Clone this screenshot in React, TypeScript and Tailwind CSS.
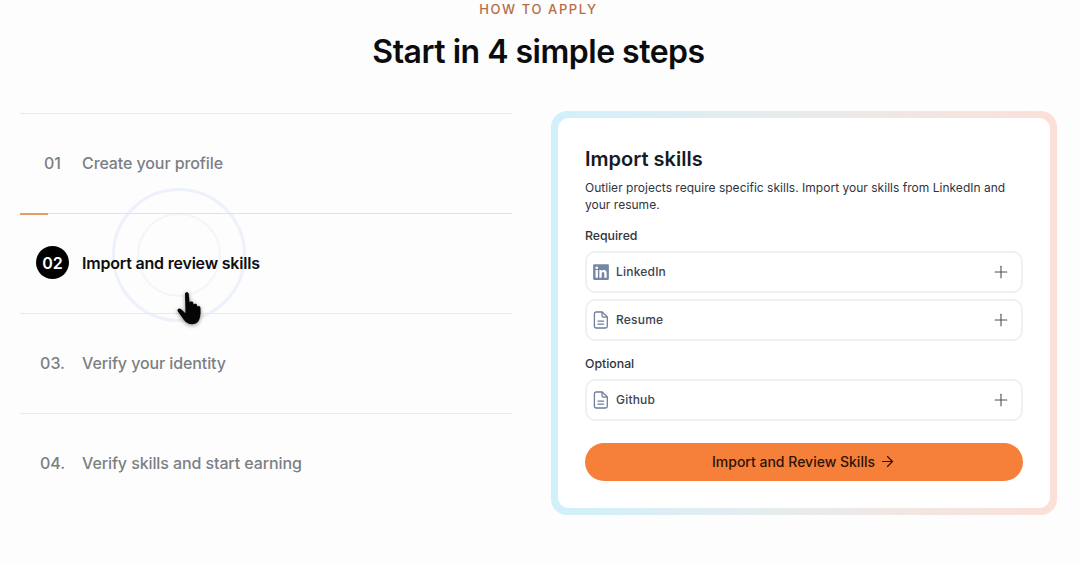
import { ArrowRight, Plus } from 'lucide-react';
import { FaLinkedin } from 'react-icons/fa';

const steps = [
  { num: '01', label: 'Create your profile' },
  { num: '02', label: 'Import and review skills', active: true },
  { num: '03.', label: 'Verify your identity' },
  { num: '04.', label: 'Verify skills and start earning' },
];

const DocIcon = () => (
  <svg width="16" height="18" viewBox="0 0 16 18" fill="none" stroke="#6f7f9c" strokeWidth="1.3" strokeLinejoin="round" strokeLinecap="round">
    <path d="M3 1h6.2L14.3 6v9.2a1.8 1.8 0 0 1-1.8 1.8H3.2a1.8 1.8 0 0 1-1.8-1.8V2.8A1.8 1.8 0 0 1 3 1Z" />
    <path d="M9 1.2v3.6a1.4 1.4 0 0 0 1.4 1.4h3.8" />
    <path d="M5 10.2h5.6M5 13.2h5.6" />
  </svg>
);

const HandCursor = () => (
  <svg width="26" height="36" viewBox="0 0 26 36" className="drop-shadow-[0_1px_2px_rgba(0,0,0,0.45)]">
    <path
      fill="#050505"
      d="M8 3c0-2.2 3.6-2.2 3.8 0l.8 8.6c.2-1.4 3.4-1.4 3.7.4l.3 1.4c.4-1.2 3.2-1 3.4.7l.2 1.4c.6-1 3-.7 3.2 1.1.4 4.2.2 8.6-1.2 12.2-1 2.8-3.4 4.4-6.8 4.4-4 0-6.6-1.4-8.6-4.4L.9 20.6c-1.4-2 .9-4.2 3-2.6l4.6 4.2L8 3Z"
    />
  </svg>
);

const SkillRow = ({ icon, label }: { icon: React.ReactNode; label: string }) => (
  <div className="h-[42px] flex items-center justify-between pl-[6px] pr-[10px] bg-white border-2 border-[#eef0f3] rounded-[10px]">
    <div className="flex items-center gap-[7px]">
      <span className="w-[16px] flex justify-center">{icon}</span>
      <span className="text-[12px] font-medium tracking-[0.2px] text-[#3d4350]">{label}</span>
    </div>
    <Plus size={20} strokeWidth={1.3} className="text-[#4a4f58]" />
  </div>
);

export default function App() {
  return (
    <div className="w-[1080px] h-[565px] bg-[#fdfdfd] overflow-hidden font-['Inter',sans-serif]">
      <div className="flex flex-col items-center pr-[3px]">
        <div className="h-[18px] text-[13px] leading-[18px] font-medium tracking-[1.6px] text-[#b56c45]">HOW TO APPLY</div>
        <h1 className="mt-[14px] text-[32px] leading-[40px] font-semibold tracking-[-0.5px] text-[#0c0c0e]">Start in 4 simple steps</h1>
      </div>

      <div className="flex pl-[20px] pr-[23px] mt-[39px] justify-between items-start">
        <div className="relative w-[492px] mt-[2px]">
          <div className="absolute left-[92px] top-[75px] w-[134px] h-[134px] rounded-full border-[3px] border-[#edf1fb]" />
          <div className="absolute left-[117px] top-[100px] w-[84px] h-[84px] rounded-full border-2 border-[#f4f5fa]" />

          {steps.map((step) => (
            <div
              key={step.num}
              className={
                step.active
                  ? 'relative h-[100px] border-t border-[#dfe3e8] flex items-center pl-[16px] pb-[2px] gap-[13px]'
                  : 'relative h-[100px] border-t border-[#e8e9eb] flex items-center pl-[16px] pb-[2px] gap-[13px]'
              }
            >
              {step.active ? (
                <span className="w-[33px] h-[33px] rounded-full bg-black text-white flex items-center justify-center text-[16px] font-semibold">
                  {step.num}
                </span>
              ) : (
                <span className="w-[33px] text-center text-[16px] font-medium text-[#7c7f84] whitespace-nowrap flex justify-center">
                  {step.num}
                </span>
              )}
              <span
                className={
                  step.active
                    ? 'text-[16px] font-semibold tracking-[-0.2px] text-[#0e0e10]'
                    : 'text-[16px] font-medium tracking-[-0.1px] text-[#7c7f84]'
                }
              >
                {step.label}
              </span>
            </div>
          ))}

          <div className="absolute left-0 top-[100px] w-[28px] h-[2px] bg-[#e59a6c]" />
          <div className="absolute left-[157px] top-[178px]">
            <HandCursor />
          </div>
        </div>

        <div className="w-[506px] h-[404px] p-[7px] rounded-[16px] bg-gradient-to-r from-[#d0f0fb] via-[#e9ebeb] to-[#fbe0d8]">
          <div className="h-full bg-white rounded-[11px] pt-[27px] px-[27px]">
            <h2 className="text-[20px] leading-[28px] font-semibold text-[#171a22]">Import skills</h2>
            <p className="mt-[6px] text-[12px] tracking-[0.02px] leading-[17px] text-[#30343c]">
              Outlier projects require specific skills. Import your skills from LinkedIn and your resume.
            </p>
            <div className="mt-[15px] text-[12.3px] leading-[16px] font-medium text-[#30343c]">Required</div>
            <div className="mt-[7px] flex flex-col gap-[6px]">
              <SkillRow icon={<FaLinkedin size={18} className="text-[#7687a6]" />} label="LinkedIn" />
              <SkillRow icon={<DocIcon />} label="Resume" />
            </div>
            <div className="mt-[15px] text-[12.3px] leading-[16px] font-medium text-[#30343c]">Optional</div>
            <div className="mt-[7px]">
              <SkillRow icon={<DocIcon />} label="Github" />
            </div>
            <button className="mt-[22px] w-full h-[38px] pb-[2px] rounded-full bg-[#f67f3a] flex items-center justify-center gap-[4px] text-[14px] font-medium text-[#2e1406]">
              Import and Review Skills
              <ArrowRight size={17} strokeWidth={1.7} />
            </button>
          </div>
        </div>
      </div>
    </div>
  );
}
